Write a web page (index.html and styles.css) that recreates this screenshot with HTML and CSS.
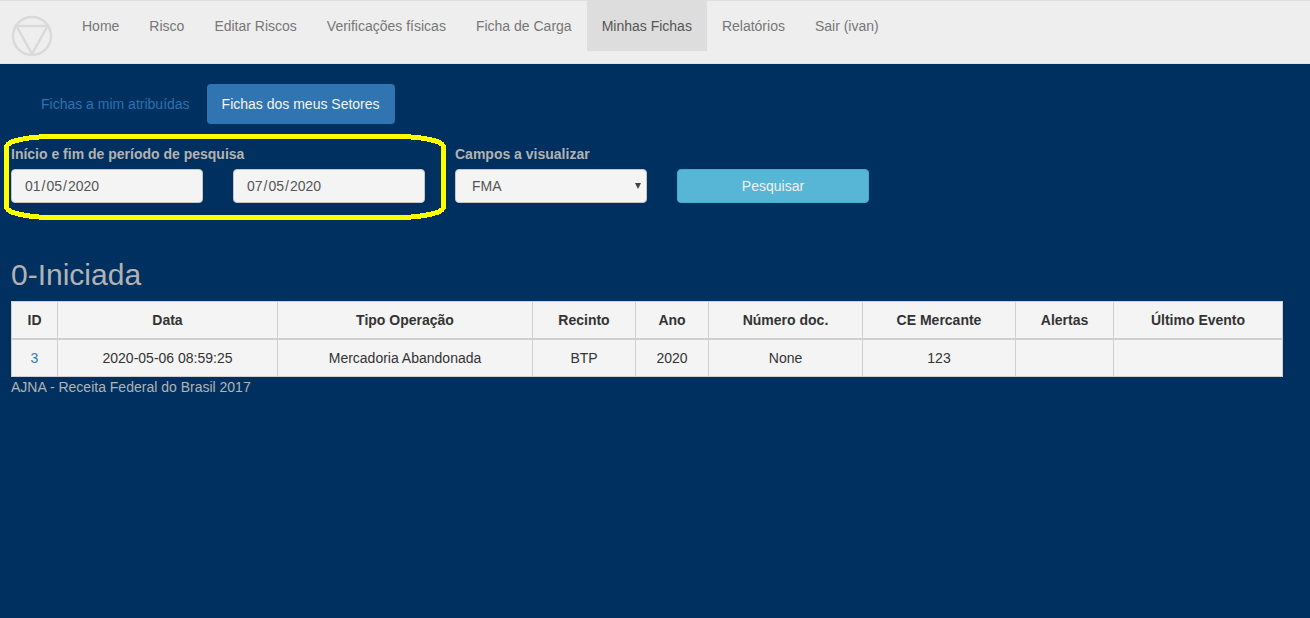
FILE: index.html
```html
<!DOCTYPE html>
<html lang="pt-BR">
<head>
<meta charset="utf-8">
<title>Minhas Fichas</title>
<link rel="stylesheet" href="styles.css">
</head>
<body>
<nav class="navbar">
  <a class="brand" href="#">
    <svg class="logo" width="42" height="42" viewBox="0 0 42 42">
      <circle cx="21" cy="21" r="19"/>
      <path d="M5.500 11h31L21 39z"/>
    </svg>
  </a>
  <ul class="menu">
    <li><a href="#">Home</a></li>
    <li><a href="#">Risco</a></li>
    <li><a href="#">Editar Riscos</a></li>
    <li><a href="#">Verificações físicas</a></li>
    <li><a href="#">Ficha de Carga</a></li>
    <li><a class="active" href="#">Minhas Fichas</a></li>
    <li><a href="#">Relatórios</a></li>
    <li><a href="#">Sair (ivan)</a></li>
  </ul>
</nav>
<main class="content">
  <div class="pills">
    <a class="pill" href="#">Fichas a mim atribuídas</a>
    <a class="pill selected" href="#">Fichas dos meus Setores</a>
  </div>
  <form class="search">
    <div class="period">
      <span class="label">Início e fim de período de pesquisa</span>
      <div class="dates">
        <div class="field"><span>01</span><span>/</span><span>05</span><span>/</span><span>2020</span></div>
        <div class="field"><span>07</span><span>/</span><span>05</span><span>/</span><span>2020</span></div>
      </div>
      <svg class="highlight" width="442" height="86" viewBox="0 0 442 86">
        <path d="M42 2.500H400Q421 3.500 433 7.500Q439.500 10 439.500 13.500V72.500Q439.500 76 433 78.500Q421 82.500 400 83.500H42Q21 82.500 9 78.500Q2.500 76 2.500 72.500V13.500Q2.500 10 9 7.500Q21 3.500 42 2.500z"/>
      </svg>
    </div>
    <div>
      <span class="label">Campos a visualizar</span>
      <div class="field select"><span>FMA</span>
        <svg width="6" height="6" viewBox="0 0 6 6"><path d="M0 0h6L3 6z"/></svg>
      </div>
    </div>
    <button class="submit" type="button">Pesquisar</button>
  </form>
  <h2 class="title">0-Iniciada</h2>
  <table class="grid">
    <colgroup>
      <col class="c-id"><col class="c-date"><col class="c-type"><col class="c-place"><col class="c-year"><col class="c-doc"><col class="c-ce"><col class="c-alert"><col class="c-event">
    </colgroup>
    <thead>
      <tr><th>ID</th><th>Data</th><th>Tipo Operação</th><th>Recinto</th><th>Ano</th><th>Número doc.</th><th>CE Mercante</th><th>Alertas</th><th>Último Evento</th></tr>
    </thead>
    <tbody>
      <tr><td><a href="#">3</a></td><td>2020-05-06 08:59:25</td><td>Mercadoria Abandonada</td><td>BTP</td><td>2020</td><td>None</td><td>123</td><td></td><td></td></tr>
    </tbody>
  </table>
  <footer>AJNA - Receita Federal do Brasil 2017</footer>
</main>
</body>
</html>
```
FILE: styles.css
```css
* { box-sizing: border-box; }
body {
  margin: 0;
  background: #003060;
  color: #b3b3b3;
  font: 14px/20px "Liberation Sans", Arial, sans-serif;
}
a { color: #337ab7; text-decoration: none; }
.navbar {
  display: flex;
  height: 64px;
  background: #eee;
  border-top: 1px solid #dedede;
  border-bottom: 1px solid #e2e2e2;
}
.brand { width: 67px; padding: 14px 0 0 11px; }
.logo { display: block; fill: none; stroke: #d9d9d9; stroke-width: 2.4; }
.menu { display: flex; margin: 0; padding: 0; list-style: none; }
.menu a { display: block; height: 50px; padding: 15px; color: #777; }
.menu .active { background: #ddd; color: #555; }
.content { padding: 20px 27px 0 11px; }
.pills { display: flex; gap: 2px; padding-left: 15px; }
.pill { padding: 10px 15px; border-radius: 4px; color: #2e71ad; }
.pill.selected { background: #3075b1; color: #f4f4f4; }
.search { display: flex; align-items: flex-end; gap: 30px; margin-top: 20px; }
.period { position: relative; }
.label { display: block; margin-bottom: 5px; font-weight: bold; }
.dates { display: flex; gap: 30px; }
.field {
  display: flex;
  align-items: center;
  gap: 1px;
  width: 192px;
  height: 34px;
  padding: 0 13px;
  border: 1px solid #c6c6c6;
  border-radius: 4px;
  background: #f4f4f4;
  color: #555;
}
.select { justify-content: space-between; padding: 0 5px 0 16px; }
.select svg { fill: #444; }
.highlight {
  position: absolute;
  left: -7px;
  top: -10px;
  fill: none;
  stroke: #ff0;
  stroke-width: 5;
  shape-rendering: crispEdges;
  pointer-events: none;
}
.submit {
  width: 192px;
  height: 34px;
  padding: 0;
  border: 1px solid #43adcd;
  border-radius: 4px;
  background: #57b6d5;
  color: #f0f0f0;
  font: inherit;
}
.title { margin: 55px 0 10px; font-size: 30px; font-weight: normal; line-height: 33px; }
.grid {
  width: 1272px;
  table-layout: fixed;
  border-collapse: collapse;
  background: #f4f4f4;
  color: #333;
  text-align: center;
}
.grid th, .grid td { height: 37px; padding: 8px 0; border: 1px solid #d0d0d0; }
.grid th { border-bottom-width: 2px; }
.grid td { padding-bottom: 7px; }
.c-id { width: 46px; }
.c-date { width: 220px; }
.c-type { width: 255px; }
.c-place { width: 103px; }
.c-year { width: 73px; }
.c-doc { width: 154px; }
.c-ce { width: 153px; }
.c-alert { width: 98px; }
.c-event { width: 169px; }
```
